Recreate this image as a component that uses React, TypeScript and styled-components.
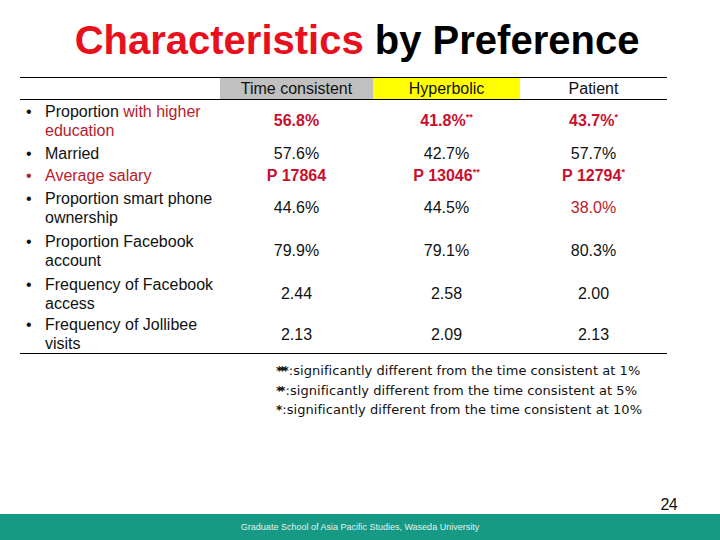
import React from "react";
import styled, { createGlobalStyle } from "styled-components";

const Global = createGlobalStyle`
  html, body { margin: 0; padding: 0; background: #fff; }
  body { font-family: "Liberation Sans", Arial, sans-serif; }
`;

const RED = "#c8102e";
const SOFTRED = "#b8202c";

const Page = styled.div`
  width: 720px;
  height: 540px;
  display: flex;
  flex-direction: column;
  background: #fff;
  overflow: hidden;
`;

const Title = styled.h1`
  margin: 18px 0 0;
  height: 44px;
  font-size: 40px;
  line-height: 44px;
  font-weight: 700;
  text-align: center;
  color: #000;
  padding-right: 6px;
  white-space: nowrap;
`;

const TitleRed = styled.span`
  color: #e8101c;
`;

const Table = styled.div`
  margin: 15px 0 0 20px;
  width: 647px;
  border-top: 1px solid #000;
  border-bottom: 1px solid #000;
`;

const Grid = styled.div`
  display: grid;
  grid-template-columns: 200px 153px 147px 147px;
`;

const HeadRow = styled(Grid)`
  height: 21px;
  border-bottom: 1px solid #000;
`;

const HeadCell = styled.div<{ $bg?: string }>`
  background: ${(p) => p.$bg || "#fff"};
  font-size: 16px;
  line-height: 21px;
  text-align: center;
  color: #111;
`;

const Row = styled(Grid)<{ $pt?: number; $pb?: number }>`
  padding-top: ${(p) => p.$pt ?? 2.5}px;
  padding-bottom: ${(p) => p.$pb ?? 2.5}px;
  align-items: center;
`;

const Item = styled.div<{ $red?: boolean }>`
  display: flex;
  font-size: 16px;
  line-height: 19px;
  color: ${(p) => (p.$red ? SOFTRED : "#111")};
`;

const Bullet = styled.span`
  width: 25px;
  padding-left: 6px;
  box-sizing: border-box;
  flex: none;
`;

const ItemText = styled.span`
  flex: 1;
`;

const Accent = styled.span`
  color: ${SOFTRED};
`;

const Val = styled.div<{ $bold?: boolean; $red?: boolean }>`
  text-align: center;
  font-size: 16px;
  line-height: 19px;
  font-weight: ${(p) => (p.$bold ? 700 : 400)};
  color: ${(p) => (p.$red ? (p.$bold ? RED : SOFTRED) : "#111")};
`;

const Sup = styled.sup`
  font-size: 9px;
  line-height: 0;
  vertical-align: 6px;
`;

const Notes = styled.div`
  margin: 7px 0 0 276px;
  font-family: "DejaVu Sans", "Liberation Sans", sans-serif;
  font-size: 13px;
  line-height: 19.5px;
  color: #111;
  letter-spacing: 0.05px;
`;

const NoteLine = styled.div`
  height: 19.5px;
  white-space: nowrap;
`;

const Stars = styled.span`
  font-weight: 700;
  letter-spacing: -3px;
  font-size: 12px;
  line-height: 0;
  margin-right: 3px;
`;

const Spacer = styled.div`
  flex: 1;
`;

const PageNum = styled.div`
  text-align: right;
  padding-right: 43px;
  font-size: 16px;
  line-height: 18px;
  margin-bottom: 0;
  color: #111;
  letter-spacing: -0.6px;
`;

const Footer = styled.div`
  height: 26px;
  background: #169a85;
  color: #e4f2ee;
  font-size: 9px;
  line-height: 26px;
  text-align: center;
`;

export default function App() {
  return (
    <Page>
      <Global />
      <Title>
        <TitleRed>Characteristics</TitleRed> by Preference
      </Title>
      <Table>
        <HeadRow>
          <HeadCell />
          <HeadCell $bg="#c0c0c0">Time consistent</HeadCell>
          <HeadCell $bg="#ffff00">Hyperbolic</HeadCell>
          <HeadCell>Patient</HeadCell>
        </HeadRow>

        <Row $pt={1.5}>
          <Item>
            <Bullet>•</Bullet>
            <ItemText>
              Proportion <Accent>with higher education</Accent>
            </ItemText>
          </Item>
          <Val $bold $red>56.8%</Val>
          <Val $bold $red>
            41.8%<Sup>**</Sup>
          </Val>
          <Val $bold $red>
            43.7%<Sup>*</Sup>
          </Val>
        </Row>

        <Row $pt={1.5} $pb={1.5}>
          <Item>
            <Bullet>•</Bullet>
            <ItemText>Married</ItemText>
          </Item>
          <Val>57.6%</Val>
          <Val>42.7%</Val>
          <Val>57.7%</Val>
        </Row>

        <Row $pt={1.5} $pb={1.5}>
          <Item $red>
            <Bullet>•</Bullet>
            <ItemText>Average salary</ItemText>
          </Item>
          <Val $bold $red>P 17864</Val>
          <Val $bold $red>
            P 13046<Sup>**</Sup>
          </Val>
          <Val $bold $red>
            P 12794<Sup>*</Sup>
          </Val>
        </Row>

        <Row>
          <Item>
            <Bullet>•</Bullet>
            <ItemText>Proportion smart phone ownership</ItemText>
          </Item>
          <Val>44.6%</Val>
          <Val>44.5%</Val>
          <Val $red>38.0%</Val>
        </Row>

        <Row>
          <Item>
            <Bullet>•</Bullet>
            <ItemText>Proportion Facebook account</ItemText>
          </Item>
          <Val>79.9%</Val>
          <Val>79.1%</Val>
          <Val>80.3%</Val>
        </Row>

        <Row $pb={1.5}>
          <Item>
            <Bullet>•</Bullet>
            <ItemText>Frequency of Facebook access</ItemText>
          </Item>
          <Val>2.44</Val>
          <Val>2.58</Val>
          <Val>2.00</Val>
        </Row>

        <Row $pt={1} $pb={0}>
          <Item>
            <Bullet>•</Bullet>
            <ItemText>Frequency of Jollibee visits</ItemText>
          </Item>
          <Val>2.13</Val>
          <Val>2.09</Val>
          <Val>2.13</Val>
        </Row>
      </Table>

      <Notes>
        <NoteLine>
          <Stars>***</Stars>:significantly different from the time consistent at 1%
        </NoteLine>
        <NoteLine>
          <Stars>**</Stars>:significantly different from the time consistent at 5%
        </NoteLine>
        <NoteLine>
          <Stars>*</Stars>:significantly different from the time consistent at 10%
        </NoteLine>
      </Notes>

      <Spacer />
      <PageNum>24</PageNum>
      <Footer>Graduate School of Asia Pacific Studies, Waseda University</Footer>
    </Page>
  );
}
